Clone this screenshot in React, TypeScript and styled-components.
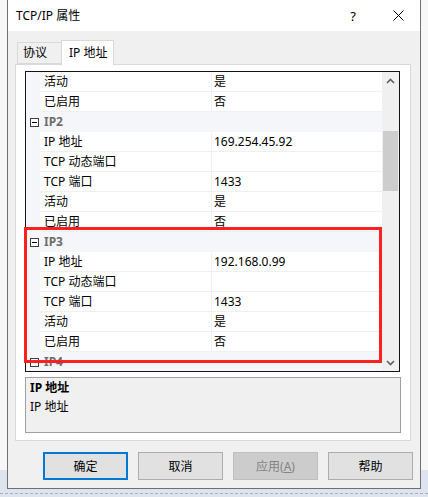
import React from "react";
import styled, { createGlobalStyle } from "styled-components";

const Global = createGlobalStyle`
  html, body { margin: 0; padding: 0; }
  body {
    width: 428px;
    height: 497px;
    overflow: hidden;
    background: linear-gradient(#f7f7f7 0, #f7f7f7 470px, #dde4ee 470px);
    font-family: "Noto Sans", "Noto Sans CJK SC", sans-serif;
    font-size: 12px;
    color: #000;
  }
`;

const Page = styled.div`
  display: flex;
  flex-direction: column;
  padding-left: 7px;
`;

const Window = styled.div`
  width: 412px;
  height: 488px;
  border: 1px solid #707070;
  border-top: none;
  background: #f0f0f0;
  display: flex;
  flex-direction: column;
`;

const TitleBar = styled.div`
  height: 31px;
  background: #fff;
  display: flex;
  align-items: center;
  padding-left: 8px;
`;

const TitleText = styled.div`
  flex: 1;
  font-size: 12px;
  line-height: 16px;
`;

const TitleButton = styled.div<{ $w: number }>`
  width: ${(p) => p.$w}px;
  height: 31px;
  display: flex;
  align-items: center;
  justify-content: center;
  font-size: 13px;
`;

const Body = styled.div`
  flex: 1;
  display: flex;
  flex-direction: column;
  padding-top: 9px;
`;

const TabStrip = styled.div`
  display: flex;
  align-items: flex-end;
  height: 24px;
  padding-left: 9px;
  position: relative;
  z-index: 1;
`;

const Tab = styled.div<{ $active?: boolean }>`
  box-sizing: border-box;
  height: ${(p) => (p.$active ? 25 : 22)}px;
  border: 1px solid #d9d9d9;
  border-bottom: ${(p) => (p.$active ? "none" : "1px solid #d9d9d9")};
  background: ${(p) => (p.$active ? "#fff" : "#f0f0f0")};
  margin-bottom: ${(p) => (p.$active ? -1 : 0)}px;
  margin-left: ${(p) => (p.$active ? -1 : 0)}px;
  padding: ${(p) => (p.$active ? "2px 6px 0 7px" : "0 14px 0 5px")};
  line-height: 20px;
  font-size: 12px;
`;

const Panel = styled.div`
  box-sizing: border-box;
  margin-left: 7px;
  width: 396px;
  height: 377px;
  background: #fff;
  border: 1px solid #d9d9d9;
  padding: 6px 0 0 9px;
  display: flex;
  flex-direction: column;
`;

const GridWrap = styled.div`
  position: relative;
  width: 375px;
  height: 301px;
`;

const Grid = styled.div`
  box-sizing: border-box;
  width: 375px;
  height: 301px;
  border: 1px solid #141414;
  display: flex;
`;

const Rows = styled.div`
  flex: 1;
  overflow: hidden;
  display: flex;
  flex-direction: column;
`;

const PropRow = styled.div`
  display: grid;
  grid-template-columns: 14px 172px 1fr;
  height: 20px;
  flex: none;
`;

const Gutter = styled.div`
  background: #f4f6fa;
  display: flex;
  align-items: center;
  justify-content: center;
`;

const NameCell = styled.div`
  box-sizing: border-box;
  border-right: 1px solid #eef0f3;
  border-bottom: 1px solid #eef0f3;
  padding-left: 4px;
  line-height: 19px;
  white-space: nowrap;
`;

const ValueCell = styled.div`
  box-sizing: border-box;
  border-bottom: 1px solid #eef0f3;
  padding-left: 2px;
  line-height: 19px;
  white-space: nowrap;
`;

const CatRow = styled.div`
  display: grid;
  grid-template-columns: 14px 1fr;
  height: 20px;
  flex: none;
  background: #f4f6fa;
`;

const CatLabel = styled.div`
  padding-left: 4px;
  font-weight: bold;
  color: #6d6d6d;
  line-height: 20px;
`;

const MinusBox = styled.div`
  box-sizing: border-box;
  width: 9px;
  height: 9px;
  border: 1px solid #3c3c3c;
  background: #fff;
  position: relative;
  margin-left: 2px;
  &::after {
    content: "";
    position: absolute;
    left: 1px;
    right: 1px;
    top: 3px;
    height: 1px;
    background: #000;
  }
`;

const Scrollbar = styled.div`
  width: 17px;
  background: #f0f0f0;
  display: flex;
  flex-direction: column;
`;

const ArrowBtn = styled.div`
  height: 17px;
  display: flex;
  align-items: center;
  justify-content: center;
  flex: none;
`;

const Track = styled.div`
  flex: 1;
  display: flex;
  flex-direction: column;
  padding-top: 42px;
`;

const Thumb = styled.div`
  height: 60px;
  margin: 0 1px;
  background: #cdcdcd;
`;

const Highlight = styled.div`
  position: absolute;
  box-sizing: border-box;
  left: -1px;
  top: 156px;
  width: 358px;
  height: 136px;
  border: 3px solid #ff2020;
  pointer-events: none;
`;

const Desc = styled.div`
  box-sizing: border-box;
  margin-top: 5px;
  width: 376px;
  height: 56px;
  border: 1px solid #a0a0a0;
  background: #f0f0f0;
  padding: 1px 0 0 4px;
`;

const DescTitle = styled.div`
  font-weight: bold;
  line-height: 18px;
`;

const DescText = styled.div`
  line-height: 20px;
`;

const ButtonRow = styled.div`
  display: flex;
  gap: 10px;
  padding: 11px 0 0 35px;
`;

const Button = styled.div<{ $primary?: boolean; $disabled?: boolean }>`
  box-sizing: border-box;
  width: 85px;
  height: 28px;
  display: flex;
  align-items: center;
  justify-content: center;
  font-size: 12px;
  background: ${(p) => (p.$disabled ? "#cccccc" : "#e1e1e1")};
  color: ${(p) => (p.$disabled ? "#838383" : "#000")};
  border: ${(p) =>
    p.$primary ? "2px solid #0078d7" : p.$disabled ? "1px solid #bfbfbf" : "1px solid #adadad"};
`;

const BottomStrip = styled.div`
  height: 8px;
  margin-left: -7px;
  box-sizing: border-box;
  padding-top: 4px;
`;

const Dashed = styled.div`
  border-top: 1px dashed #a9b0ba;
`;

type Row =
  | { kind: "cat"; name: string }
  | { kind: "prop"; name: string; value: string };

const rows: Row[] = [
  { kind: "prop", name: "活动", value: "是" },
  { kind: "prop", name: "已启用", value: "否" },
  { kind: "cat", name: "IP2" },
  { kind: "prop", name: "IP 地址", value: "169.254.45.92" },
  { kind: "prop", name: "TCP 动态端口", value: "" },
  { kind: "prop", name: "TCP 端口", value: "1433" },
  { kind: "prop", name: "活动", value: "是" },
  { kind: "prop", name: "已启用", value: "否" },
  { kind: "cat", name: "IP3" },
  { kind: "prop", name: "IP 地址", value: "192.168.0.99" },
  { kind: "prop", name: "TCP 动态端口", value: "" },
  { kind: "prop", name: "TCP 端口", value: "1433" },
  { kind: "prop", name: "活动", value: "是" },
  { kind: "prop", name: "已启用", value: "否" },
  { kind: "cat", name: "IP4" },
];

const Chevron = ({ up }: { up?: boolean }) => (
  <svg width="9" height="6" viewBox="0 0 9 6">
    <path
      d={up ? "M1 5 L4.5 1.5 L8 5" : "M1 1 L4.5 4.5 L8 1"}
      fill="none"
      stroke="#606060"
      strokeWidth="1.6"
    />
  </svg>
);

export default function App() {
  return (
    <>
      <Global />
      <Page>
        <Window>
          <TitleBar>
            <TitleText>TCP/IP 属性</TitleText>
            <TitleButton $w={30}>?</TitleButton>
            <TitleButton $w={8} />
            <TitleButton $w={44}>
              <svg width="11" height="11" viewBox="0 0 11 11">
                <path d="M0.5 0.5 L10.5 10.5 M10.5 0.5 L0.5 10.5" stroke="#000" strokeWidth="1" fill="none" />
              </svg>
            </TitleButton>
          </TitleBar>
          <Body>
            <TabStrip>
              <Tab>协议</Tab>
              <Tab $active>IP 地址</Tab>
            </TabStrip>
            <Panel>
              <GridWrap>
                <Grid>
                  <Rows>
                    {rows.map((r, i) =>
                      r.kind === "cat" ? (
                        <CatRow key={i}>
                          <Gutter>
                            <MinusBox />
                          </Gutter>
                          <CatLabel>{r.name}</CatLabel>
                        </CatRow>
                      ) : (
                        <PropRow key={i}>
                          <Gutter />
                          <NameCell>{r.name}</NameCell>
                          <ValueCell>{r.value}</ValueCell>
                        </PropRow>
                      )
                    )}
                  </Rows>
                  <Scrollbar>
                    <ArrowBtn>
                      <Chevron up />
                    </ArrowBtn>
                    <Track>
                      <Thumb />
                    </Track>
                    <ArrowBtn>
                      <Chevron />
                    </ArrowBtn>
                  </Scrollbar>
                </Grid>
                <Highlight />
              </GridWrap>
              <Desc>
                <DescTitle>IP 地址</DescTitle>
                <DescText>IP 地址</DescText>
              </Desc>
            </Panel>
            <ButtonRow>
              <Button $primary>确定</Button>
              <Button>取消</Button>
              <Button $disabled>
                应用(<u>A</u>)
              </Button>
              <Button>帮助</Button>
            </ButtonRow>
          </Body>
        </Window>
        <BottomStrip>
          <Dashed />
        </BottomStrip>
      </Page>
    </>
  );
}
